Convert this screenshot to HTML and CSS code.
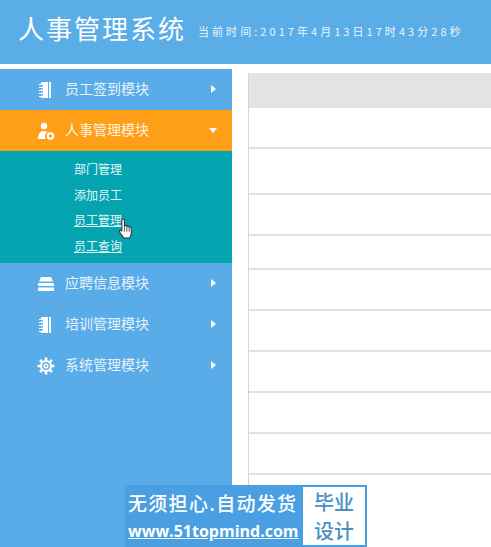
FILE: index.html
```html
<!DOCTYPE html>
<html lang="zh-CN">
<head>
    <meta charset="UTF-8">
    <meta name="viewport" content="width=device-width, initial-scale=1.0">
    <title>人事管理系统</title>
    <link rel="stylesheet" href="styles.css">
</head>
<body>
    <div class="header">
        <h1>人事管理系统</h1>
        <span class="clock">当前时间:2017年4月13日17时43分28秒</span>
    </div>

    <div class="main">
        <!-- 左侧菜单 -->
        <div class="sidebar">
            <div class="menu-item">
                <svg class="menu-icon" viewBox="0 0 18 18"><path fill="#fff" d="M4 1h10v16H4v-2.500h2V13H4v-1.500h2V10H4V8.500h2V7H4V5.500h2V4H4V2.500z"/><path fill="#5aace8" d="M11 1h1v16h-1z"/><path fill="#fff" d="M2 3h3v1H2zM2 6h3v1H2zM2 9h3v1H2zM2 12h3v1H2zM2 15h3v1H2z"/></svg>
                <span class="menu-text">员工签到模块</span>
                <span class="arrow-right"></span>
            </div>
            <div class="menu-item active">
                <svg class="menu-icon" viewBox="0 0 18 18"><circle fill="#fff" cx="7" cy="4" r="3.200"/><path fill="#fff" d="M1 17c0-5 2-8 6-8 1.500 0 2.600.4 3.500 1.100C8.700 11 7.800 12.700 8 15l.8 2z"/><circle fill="none" stroke="#fff" stroke-width="2" cx="13.500" cy="14" r="2.800"/></svg>
                <span class="menu-text">人事管理模块</span>
                <span class="arrow-down"></span>
            </div>
            <div class="submenu">
                <a>部门管理</a>
                <a>添加员工</a>
                <a class="underlined">员工管理</a>
                <a class="underlined">员工查询</a>
                <svg class="hand" viewBox="0 0 14 20"><path fill="#fff" stroke="#333" stroke-width="1" stroke-linejoin="round" d="M3.500 2.200c0-1.600 2.500-1.600 2.500 0V8c0-1.300 2.300-1.300 2.300 0v.6c0-1.200 2.200-1.200 2.200 0v.8c0-1.100 2-1.100 2 .2V14c0 2.200-1 3-1.500 5H5c-.6-1.800-2-3-3.500-5.500C.6 12 1.800 10.800 3.500 12.500z"/><path stroke="#333" stroke-width=".8" d="M6 9v4M8.300 9v4M10.500 9.500v3.500"/></svg>
            </div>
            <div class="menu-item">
                <svg class="menu-icon" viewBox="0 0 18 18"><path fill="#fff" d="M4 2h10l2 4.500H2zM1 8h16v3H1zM1 12.500h16V16H1z"/></svg>
                <span class="menu-text">应聘信息模块</span>
                <span class="arrow-right"></span>
            </div>
            <div class="menu-item">
                <svg class="menu-icon" viewBox="0 0 18 18"><path fill="#fff" d="M4 1h10v16H4v-2.500h2V13H4v-1.500h2V10H4V8.500h2V7H4V5.500h2V4H4V2.500z"/><path fill="#5aace8" d="M11 1h1v16h-1z"/><path fill="#fff" d="M2 3h3v1H2zM2 6h3v1H2zM2 9h3v1H2zM2 12h3v1H2zM2 15h3v1H2z"/></svg>
                <span class="menu-text">培训管理模块</span>
                <span class="arrow-right"></span>
            </div>
            <div class="menu-item">
                <svg class="menu-icon" viewBox="0 0 18 18"><circle fill="none" stroke="#fff" stroke-width="2.200" cx="9" cy="9" r="5"/><circle fill="none" stroke="#fff" stroke-width="1.500" cx="9" cy="9" r="1.800"/><path stroke="#fff" stroke-width="2.600" d="M9 .6v3M9 14.400v3M.6 9h3M14.400 9h3M3 3l2.200 2.200M12.800 12.800 15 15M15 3l-2.200 2.200M5.200 12.800 3 15"/></svg>
                <span class="menu-text">系统管理模块</span>
                <span class="arrow-right"></span>
            </div>
        </div>

        <!-- 右侧表格 -->
        <div class="content">
            <div class="table-head"></div>
            <div class="row"></div>
            <div class="row tall"></div>
            <div class="row"></div>
            <div class="row short"></div>
            <div class="row"></div>
            <div class="row"></div>
            <div class="row"></div>
            <div class="row"></div>
            <div class="row"></div>
            <div class="row"></div>
        </div>
    </div>

    <!-- 水印广告 -->
    <div class="banner">
        <div class="banner-left">
            <div class="banner-title">无须担心.自动发货</div>
            <div class="banner-url">www.51topmind.com</div>
        </div>
        <div class="banner-right">毕业<br>设计</div>
    </div>
</body>
</html>
```

FILE: styles.css
```css
body {
    margin: 0;
    height: 547px;
    overflow: hidden;
    background-color: white;
    font-family: "Noto Sans CJK SC", "Liberation Sans", sans-serif;
    position: relative;
}
.header {
    height: 64px;
    background-color: #5aade6;
    color: white;
    display: flex;
    align-items: center;
    padding-left: 18px;
    padding-bottom: 10px;
    box-sizing: border-box;
}
.header h1 {
    margin: 0;
    font-size: 26px;
    font-weight: normal;
    letter-spacing: 2px;
}
.clock {
    margin-left: 12px;
    margin-top: 8px;
    font-size: 11px;
    letter-spacing: 3.050px;
    white-space: nowrap;
    color: #eaf5fc;
}
.main {
    display: flex;
    margin-top: 5px;
    height: 478px;
}
.sidebar {
    width: 232px;
    flex-shrink: 0;
    background-color: #5aace8;
}
.menu-item {
    height: 41px;
    display: flex;
    align-items: center;
    padding-left: 37px;
    color: #e6f3fc;
    font-size: 14px;
}
.menu-item.active {
    background-color: #ff9f17;
    color: #fff3e0;
}
.menu-icon {
    width: 18px;
    height: 18px;
    flex-shrink: 0;
}
.menu-text {
    margin-left: 10px;
    width: 146px;
    margin-top: -3px;
}
.arrow-right {
    width: 0;
    height: 0;
    margin-top: -2px;
    border-top: 4px solid transparent;
    border-bottom: 4px solid transparent;
    border-left: 5px solid white;
}
.arrow-down {
    width: 0;
    height: 0;
    margin-left: -2px;
    border-left: 4px solid transparent;
    border-right: 4px solid transparent;
    border-top: 5px solid white;
}
.submenu {
    height: 112px;
    background-color: #04a4b0;
    padding-top: 5px;
    box-sizing: border-box;
    position: relative;
}
.submenu a {
    display: block;
    height: 25.700px;
    line-height: 25.700px;
    padding-left: 74px;
    color: #e6f7f8;
    font-size: 12px;
}
.submenu a.underlined {
    text-decoration: underline;
}
.hand {
    position: absolute;
    left: 118px;
    top: 67px;
    width: 15px;
    height: 21px;
}
.content {
    margin-left: 16px;
    margin-top: 4px;
    flex-grow: 1;
    border-left: 1px solid #d5d5d5;
}
.table-head {
    height: 33px;
    background-color: #e4e4e4;
}
.row {
    height: 39px;
    border-top: 2px solid #e2e2e0;
}
.row.tall {
    height: 44px;
}
.row.short {
    height: 32px;
}
.banner {
    position: absolute;
    left: 125px;
    top: 485px;
    width: 242px;
    height: 62px;
    background-color: #4a9fe2;
    display: flex;
    box-sizing: border-box;
    padding: 2px;
}
.banner-left {
    width: 176px;
    color: white;
    padding-left: 1px;
    box-sizing: border-box;
}
.banner-title {
    font-size: 19px;
    font-weight: 500;
    line-height: 32px;
    white-space: nowrap;
    letter-spacing: 1.300px;
}
.banner-url {
    font-family: "Open Sans", sans-serif;
    font-size: 16px;
    font-weight: 700;
    line-height: 24px;
    white-space: nowrap;
    text-decoration: underline;
}
.banner-right {
    flex-grow: 1;
    background-color: white;
    color: #4a8fc4;
    font-size: 20px;
    font-weight: 500;
    line-height: 29px;
    text-align: center;
}
```
